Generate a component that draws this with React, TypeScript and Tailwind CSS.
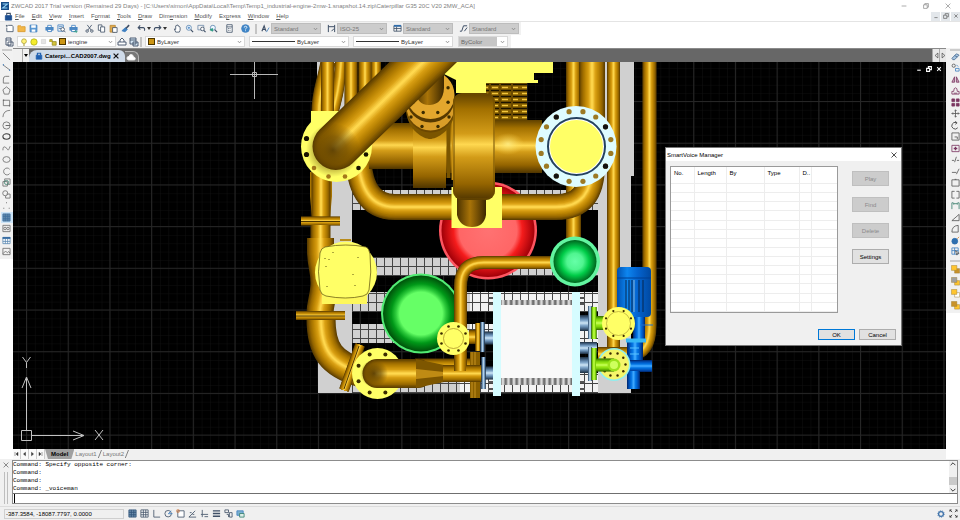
import type { ReactNode } from 'react'

const NAVY = '#3f4f66'
const BLUE = '#3f7fc0'
const PLUM = '#7a3560'
const YEL = '#ffff66'

function Glyph({ children, color = NAVY, className = 'w-[10px] h-[10px]' }: { children: ReactNode; color?: string; className?: string }) {
  return (
    <svg viewBox="0 0 10 10" className={`${className} shrink-0`} fill="none" stroke={color} strokeWidth="0.9" aria-hidden="true">
      {children}
    </svg>
  )
}

function ToolButton({ label, children, className = '' }: { label: string; children: ReactNode; className?: string }) {
  return (
    <button aria-label={label} title={label} className={`flex w-3 h-[11px] shrink-0 items-center justify-center ${className}`}>
      {children}
    </button>
  )
}

function Grip() {
  return <span className="w-[2px] h-[10px] shrink-0 border-x border-[#c4c4c4]" />
}

function Chevron() {
  return (
    <svg viewBox="0 0 6 4" className="w-[5px] h-[4px] shrink-0" fill="none" stroke="#808080" strokeWidth="0.9">
      <path d="M1 .8 3 3 5 .8" />
    </svg>
  )
}

function Combo({ label, value, className, children }: { label: string; value: string; className: string; children?: ReactNode }) {
  return (
    <label className={`flex h-[11px] shrink-0 items-center gap-[2px] border px-[2px] ${className}`}>
      {children}
      <select aria-label={label} className="h-full min-w-0 flex-1 appearance-none bg-transparent leading-none outline-none">
        <option>{value}</option>
      </select>
      <Chevron />
    </label>
  )
}

const printer = (
  <>
    <path d="M3 4V1.5h4V4" fill="#fff" stroke={BLUE} />
    <rect x="1" y="3.8" width="8" height="3" fill="#4e8ac4" stroke={BLUE} />
    <rect x="3" y="6" width="4" height="2.5" fill="#fff" stroke={BLUE} />
  </>
)
const lens = (
  <>
    <circle cx="4.3" cy="4.2" r="2.8" fill="#eef6ff" stroke="#5d87b0" />
    <path d="M6.4 6.3 9 9" strokeWidth="1.3" />
  </>
)

const standardTools: [string, ReactNode][][] = [
  [
    ['New', <path d="M1 2h2M2 1v2M3.5 1.5H8L9 3v5.5H2V4" fill="#fff" />],
    ['Open', <path d="M1 8.5V2h3l1 1h4v5.5Z" fill="#f3b748" stroke="#d99a2b" />],
    ['Save', <><path d="M1.2 1.2h7.6v7.6H1.2Z" fill="#5d9bd4" stroke={BLUE} /><path d="M2.5 1.5h5v2.6h-5ZM3 6h4v2.6H3Z" fill="#fff" stroke="none" /></>],
  ],
  [
    ['Print', printer],
    ['Preview', <><path d="M1 1h6v7H1ZM2 3h4M2 5h3" stroke={BLUE} /><circle cx="6.3" cy="6" r="2" fill="#fff" /><path d="m7.8 7.5 1.6 1.7" /></>],
    ['Publish', <>{printer}<path d="M5 8.5h4L7.5 7M9 8.5 7.5 9.7" stroke="#2a9c80" /></>],
  ],
  [
    ['Cut', <><path d="M2.5 1 7 7M7.5 1 3 7" /><circle cx="2.4" cy="7.8" r="1.4" /><circle cx="7.6" cy="7.8" r="1.4" /></>],
    ['Copy', <><path d="M1.5 1h4v6h-4Z" fill="#fff" /><path d="M4 3.2h4.5V9H4Z" fill="#fff" /></>],
    ['Paste', <><path d="M1.2 1.5H7V9H1.2Z" fill="#e0aa4c" stroke="#b98632" /><path d="M4 4h5v5.3H4Z" fill="#fff" /></>],
    ['Match properties', <><path d="M1 7.5 5 4l2 2-2.5 2.7Z" fill="#3f7fc0" stroke={BLUE} /><path d="M5.5 5 9 1.2" strokeWidth="1.8" /></>],
  ],
  [
    ['Undo', <path d="M3.5 1.5 1.3 4l2.4 2.3M1.5 4H7q2 .3 1.3 3.5" strokeWidth="1.2" />],
    ['Redo', <path d="M6.5 1.5 8.7 4 6.3 6.3M8.5 4H3q-2 .3-1.3 3.5" strokeWidth="1.2" />],
  ],
  [
    ['Pan', <path d="M3 9 1.5 5.5 3 6V2q.7-.8 1.2 0V1.4q.7-.7 1.2 0V2q.8-.6 1.2.3v1q.8-.5 1.3.3V7L7 9Z" fill="#fff" />],
    ['Zoom realtime', <>{lens}<path d="M3 4.2h2.6M4.3 3v2.5" stroke={BLUE} /></>],
    ['Zoom window', <><path d="M1 1.5h6.5v5H1Z" stroke="#6d8aa9" /><circle cx="6" cy="5.5" r="2" fill="#fff" /><path d="m7.5 7 2 2" strokeWidth="1.3" /></>],
    ['Zoom previous', <>{lens}<path d="M1 6.5 4 5v3Z" fill="#2a9c80" stroke="#2a9c80" /></>],
  ],
  [['Calculator', <><path d="M2 .8h6v8.4H2ZM2 3.2h6" fill="#fff" /><path d="M3.5 5h3M3.5 7h3" strokeDasharray="1 .6" /></>]],
  [['Help', <><circle cx="5" cy="5" r="4.3" fill="#3f86c8" stroke={BLUE} /><path d="M3.6 4q0-1.5 1.5-1.5T6.5 4Q6.4 4.7 5 5.4V6M5 7v1" stroke="#fff" /></>]],
]

const drawTools: [string, ReactNode][] = [
  ['Line', <path d="m1 1 8 8" />],
  ['Construction line', <><path d="m1 2 8 6" /><path d="M1 2h1M8 8h1" strokeWidth="1.8" stroke={BLUE} /></>],
  ['Polyline', <path d="M8 1.5H4Q1.500 1.500 1.500 4.500V9H8" />],
  ['Polygon', <path d="M5 1 9 4.2 7.5 9h-5L1 4.2Z" />],
  ['Rectangle', <><path d="M1.5 2.5h7v6h-7Z" /><path d="M1 2.5h1.4M7.7 8.5H9" strokeWidth="1.8" /></>],
  ['Arc', <path d="M1 9Q1.5 1.5 9 1.5" />],
  ['Circle', <><circle cx="5" cy="5" r="4" /><path d="M5 5h4M4 5h2" strokeWidth="1.2" /></>],
  ['Ellipse', <ellipse cx="5" cy="5" rx="4" ry="3" strokeWidth="1.2" stroke="#3c3c3c" />],
  ['Spline', <path d="M1 7Q1 2 3.5 3.5T6.5 6.5 9 2.5" />],
  ['Ellipse axis', <ellipse cx="5" cy="5" rx="4" ry="3.2" />],
  ['Ellipse arc', <path d="M8.5 2.5A3.8 3.8 0 1 0 8.8 7" />],
  ['Insert block', <><path d="M1 4h5v5H1ZM3 3.5V1h6v6H6.5" /><circle cx="5" cy="5" r="2.3" stroke="#3a806d" /></>],
  ['Make block', <><circle cx="3.6" cy="3.6" r="2.8" /><path d="M5 4.5h4V9H4V6.5" /></>],
  ['Point', <path d="M4.5 2h1M1.5 8h1M7.5 8h1" strokeWidth="1.2" />],
  ['Hatch', <path d="M1 1h8v8H1ZM1 3.7h8M1 6.4h8M3.7 1v8M6.4 1v8" fill="#638aac" stroke="#3f6f9d" />],
  ['Region', <><path d="M1 1.5h8v7H1Z" /><circle cx="3.4" cy="5" r="1.4" /><circle cx="6.6" cy="5" r="1.4" /></>],
  ['Table', <><path d="M1 1.5h8v7H1ZM1 6h8M3.7 3v5.5M6.3 3v5.5" stroke="#5b8ab3" fill="#fff" /><path d="M.7 2.2h8.6" strokeWidth="2" stroke="#3268a0" /></>],
  ['Image', <path d="M1 1.5h8v7H1Zm0 6L4 4.5l2 2L7.5 5 9 7" />],
]

const modifyTools: [string, ReactNode][] = [
  ['Erase', <path d="m1 7 5-5 3 1.5-5 5H2ZM4 4l3 1.5" fill="#a9c5e0" stroke="#476a92" />],
  ['Copy object', <><circle cx="3" cy="3" r="1.8" /><path d="M5 6h4v3H5ZM6 2l2 2" stroke={BLUE} /></>],
  ['Mirror', <path d="M4 2v6H1ZM6 2v6h3Z" fill="#c9a9bd" stroke={PLUM} />],
  ['Offset', <path d="M1 9V6h2q0-4 2-4t2 4h2v3ZM3 8h4" stroke={PLUM} />],
  ['Array', <path d="M1 1h3v3H1Zm5 0h3v3H6ZM1 6h3v3H1Zm5 0h3v3H6Z" fill={PLUM} stroke={PLUM} />],
  ['Move', <path d="M5 1v8M1 5h8M3.8 2.2 5 1l1.2 1.2M3.8 7.8 5 9l1.2-1.2M2.2 3.8 1 5l1.2 1.2M7.8 3.8 9 5 7.8 6.2" />],
  ['Rotate', <path d="M7.5 7.5A3.7 3.7 0 1 1 6 1.8M4.5.5 6.8 2 4.8 3.7" strokeWidth="1.1" />],
  ['Scale', <path d="M1 1h8v8H1ZM4 5.5h3V8" />],
  ['Stretch', <><path d="M1 1.5h8v7H1Z" stroke={PLUM} /><path d="M5 3v4M3 5h4" stroke={PLUM} strokeWidth="1.4" /></>],
  ['Trim', <path d="M1 6h2.5M6.5 6H9M4 8l2-6" />],
  ['Extend', <path d="M1 6h5M6 8l3-6" />],
  ['Break at point', <path d="M1 2h8v7H1ZM4 1.5h2" />],
  ['Break', <path d="M4 1.5H1V9h3M6 1.5h3V9H6" />],
  ['Join', <path d="M1 9V2h1.5M9 9V2H7.5M3 3h4M3 2v2M7 2v2" stroke="#377c6b" />],
  ['Chamfer', <path d="M1 8.5h8V1.5Z" />],
  ['Fillet', <path d="M1 9Q1 2 8 1.5V9Z" />],
  ['Explode', <><circle cx="4.2" cy="5.8" r="3.2" fill="#2d6eae" stroke="#2d6eae" /><path d="M7 3 9 1" stroke="#d08030" /></>],
  ['Quick select', <><path d="M1 1h7v7H1ZM1 4h7M4 1v7" stroke={BLUE} /><path d="m5 4 4 3-2 .3L6.5 9Z" fill="#fff" /></>],
]

// label, upper sheet, lower sheet
const orderTools: [string, string, string][] = [
  ['Bring to front', '#ffc52e', '#c8922a'],
  ['Send to back', '#a0a0a0', '#ffc52e'],
  ['Bring above', '#ffc52e', '#ffffff'],
  ['Send under', '#c8922a', '#ffc52e'],
]

const statusTools: [string, ReactNode][] = [
  ['Snap', <path d="M1 1h8v8H1ZM1 3.7h8M1 6.4h8M3.7 1v8M6.4 1v8" fill="#6e8fae" stroke="#2f5378" />],
  ['Grid', <path d="M1 1h8v8H1ZM1 3.7h8M1 6.4h8M3.7 1v8M6.4 1v8" fill="#fff" />],
  ['Ortho', <path d="M2 1v8h7" />],
  ['Polar', <><circle cx="4.6" cy="5.2" r="3.6" /><path d="M4.6 5.2H9.5M5 5 8 2" stroke={BLUE} /></>],
  ['Object snap', <><path d="M2 2h7v7H2Z" fill="#fff" /><path d="M1 1h2.5v2.5H1Z" stroke="#ce743a" /></>],
  ['Object snap tracking', <path d="M1 9 8 2M1 9h8M2 4h2M5 6h2" />],
  ['Dynamic UCS', <path d="M2.5 1v5H9M1 6h1.5V9M5 8.5h4" />],
  ['Lineweight', <path d="M1 2h8M1 5h8M1 8h8" strokeWidth="1.5" />],
  ['Cycle', <path d="M1 1h4v3H1ZM3 6h2v3M6 4h3v5H6Z" />],
  ['Model space', <><path d="M1 2h7v5H1Z" fill="#7ab0cf" stroke={BLUE} /><path d="M4 5h5v4H4Z" fill="#dceee8" stroke="#327d6c" /></>],
]

type Stop = [number, number, number]
const gold: Stop[] = [[92, 62, 0], [152, 105, 0], [188, 133, 4], [218, 160, 20], [255, 216, 78]]
const lime: Stop[] = [[58, 112, 0], [94, 170, 0], [130, 214, 15], [155, 232, 25], [195, 255, 85]]
const steel: Stop[] = [[34, 52, 68], [64, 91, 120], [98, 135, 171], [138, 175, 209], [200, 225, 242]]
const azure: Stop[] = [[0, 40, 110], [0, 72, 168], [0, 98, 208], [10, 122, 230], [65, 170, 255]]

// Shaded pipe: strokes of shrinking width, from the dark rim to the highlight.
function Tube({ d, w, tones = gold, cap = 'butt' }: { d: string; w: number; tones?: Stop[]; cap?: 'butt' | 'round' }) {
  const n = 20
  return (
    <g fill="none" strokeLinecap={cap} strokeLinejoin="round">
      {Array.from({ length: n }, (_, i) => {
        const pos = (i / (n - 1)) * (tones.length - 1)
        const k = Math.min(Math.floor(pos), tones.length - 2)
        const c = tones[k].map((v, j) => Math.round(v + (tones[k + 1][j] - v) * (pos - k)))
        return <path key={i} d={d} stroke={`rgb(${c.join(',')})`} strokeWidth={w * (1 - i / n)} />
      })}
    </g>
  )
}

function Bolts({ cx, cy, r, n, size, start = 0, fill = '#3a2b00' }: { cx: number; cy: number; r: number; n: number; size: number; start?: number; fill?: string }) {
  return (
    <g fill={fill}>
      {Array.from({ length: n }, (_, i) => {
        const a = ((start + (360 / n) * i) * Math.PI) / 180
        return <circle key={i} cx={cx + r * Math.cos(a)} cy={cy + r * Math.sin(a)} r={size} />
      })}
    </g>
  )
}

function Drawing() {
  return (
    <svg viewBox="13 62 933 387" preserveAspectRatio="xMinYMin slice" className="absolute inset-0 w-full h-full" role="img" aria-label="Engine model">
      <defs>
        <pattern id="minor" x="26.5" y="101.5" width="8.34" height="8.34" patternUnits="userSpaceOnUse">
          <path d="M0 0H8.34M0 0V8.34" stroke="#101010" strokeWidth="1" />
        </pattern>
        <pattern id="major" x="26" y="101" width="41.7" height="41.7" patternUnits="userSpaceOnUse">
          <path d="M0 .5H41.7M.5 0V41.7" stroke="#262626" strokeWidth="1" />
        </pattern>
        <pattern id="mesh" x="352" y="257" width="8" height="9" patternUnits="userSpaceOnUse">
          <path d="M0 .5H8M.5 0V9" stroke="#444" strokeWidth="1" />
        </pattern>
        <pattern id="slots" x="480" y="86" width="10" height="6" patternUnits="userSpaceOnUse">
          <path d="M2 1.5h6" stroke="#f2c63c" strokeWidth="1.4" />
          <path d="M0 4.5h10" stroke="#1c1300" strokeWidth="1.6" />
        </pattern>
        <pattern id="bellows" x="501" y="298" width="5.5" height="10" patternUnits="userSpaceOnUse">
          <rect width="5.5" height="10" fill="#9c9c9c" />
          <rect x="1" width="2" height="10" fill="#dcdcdc" />
          <rect x="4" width="1.2" height="10" fill="#5c5c5c" />
        </pattern>
        <radialGradient id="red">
          <stop offset="0" stopColor="#ff7272" /><stop offset=".62" stopColor="#ff6666" /><stop offset=".74" stopColor="#f51c1c" /><stop offset="1" stopColor="#a00008" />
        </radialGradient>
        <radialGradient id="green">
          <stop offset="0" stopColor="#66ff66" /><stop offset=".56" stopColor="#66ff66" /><stop offset=".66" stopColor="#2ecb3c" /><stop offset=".78" stopColor="#009818" /><stop offset="1" stopColor="#004f0a" />
        </radialGradient>
        <radialGradient id="mint">
          <stop offset="0" stopColor="#66ffa8" /><stop offset=".38" stopColor="#50f590" /><stop offset=".65" stopColor="#00cc48" /><stop offset="1" stopColor="#00641e" />
        </radialGradient>
        <radialGradient id="elbow">
          <stop offset="0" stopColor="#4b3200" stopOpacity=".85" /><stop offset=".5" stopColor="#5a3d00" stopOpacity=".6" /><stop offset="1" stopColor="#5a3d00" stopOpacity="0" />
        </radialGradient>
        <radialGradient id="glint">
          <stop offset="0" stopColor="#fff08a" /><stop offset="1" stopColor="#ffd850" stopOpacity="0" />
        </radialGradient>
        <linearGradient id="barrel" x1="0" x2="0" y1="0" y2="1">
          <stop offset="0" stopColor="#5f4100" /><stop offset=".15" stopColor="#a27000" /><stop offset=".38" stopColor="#d39c18" /><stop offset=".48" stopColor="#ffd850" /><stop offset=".6" stopColor="#d39c18" /><stop offset=".85" stopColor="#946400" /><stop offset="1" stopColor="#4f3500" />
        </linearGradient>
        <linearGradient id="motor">
          <stop offset="0" stopColor="#0050b0" /><stop offset=".3" stopColor="#0d86f0" /><stop offset=".6" stopColor="#0464d0" /><stop offset="1" stopColor="#0048a0" />
        </linearGradient>
        <linearGradient id="stub">
          <stop offset="0" stopColor="#4c3300" /><stop offset=".45" stopColor="#a87308" /><stop offset="1" stopColor="#3c2800" />
        </linearGradient>
      </defs>

      <rect x="13" y="62" width="933" height="387" fill="#000" />
      <rect x="13" y="62" width="933" height="387" fill="url(#minor)" />
      <rect x="13" y="62" width="933" height="387" fill="url(#major)" />
      <path d="M254.500 62V99M230 74.500H278" stroke="#b8b8b8" />
      <path d="M252.500 72.500h4v4h-4Z" fill="none" stroke="#b8b8b8" />

      {/* skid */}
      <g fill="#d0d0d0">
        <path d="M317 62H352V393H318ZM598 62H634V176H631V393H598Z" />
        <path d="M352 190H598V210H352ZM352 257H598V276H352ZM352 292H598V312H352ZM352 324H598V343H352ZM352 373H598V393H352Z" />
      </g>
      <path d="M470 292H598V312H470ZM470 324H598V343H470ZM460 373H598V393H460Z" fill="#f2f2f2" />
      <path d="M352 190H598V210H352ZM352 257H598V276H352ZM352 292H598V312H352ZM352 324H598V343H352ZM352 373H598V393H352Z" fill="url(#mesh)" />
      <path d="M352 210H598V257H352Z" fill="#000" />

      {/* tanks */}
      <circle cx="488" cy="230.500" r="49" fill="#ff5560" />
      <circle cx="488" cy="230.500" r="46.500" fill="url(#red)" />
      <circle cx="421" cy="313.500" r="40" fill="#52ec74" />
      <circle cx="421" cy="313.500" r="38" fill="url(#green)" />

      {/* risers on the left */}
      <Tube d="M341 62C340 85 336 100 331 118" w={12} />
      <Tube d="M328 62C324 84 319 92 319 112V180" w={15} />
      <Tube d="M327.500 62V115" w={13} />
      <Tube d="M365 62V150" w={13} />
      <Tube d="M351 62V160" w={13} />
      <Tube d="M376 62V90" w={10} />
      <path d="M310 172H332V196L330 218H312L310 196Z" fill="#a87400" />
      <Tube d="M321 172V218" w={19} />
      <Tube d="M301 221H340" w={9} />
      <path d="M301 221.500H340" stroke="#4d3500" />
      <Tube d="M320.500 225V240" w={20} />
      <Tube d="M320.500 238V250C320.500 266 325 272 324 286S320 304 320 313" w={27} />
      <Tube d="M321 318C321 350 331 364 362 373" w={29} />
      <Tube d="M296 315.500H345" w={9} />
      <path d="M296 316H345" stroke="#4d3500" />
      <Tube d="M360 345 344 390" w={10} />
      <path d="M359 346 344 389" stroke="#4d3500" />

      {/* uprights on the right */}
      <Tube d="M573.500 62V245" w={15} />
      <Tube d="M613.500 62V352" w={13} />
      <Tube d="M649.500 62V325C649.500 344 643 354 630 354H598" w={14} />
      <Tube d="M358 150C358 188 370 207 395 207H556C582 207 592 192 592 165V62" w={26} />

      {/* manifold */}
      <rect x="369" y="123" width="45" height="46" fill="url(#barrel)" />
      <rect x="444" y="120" width="98" height="53" fill="url(#barrel)" />
      <ellipse cx="508" cy="144" rx="16" ry="11" fill="url(#glint)" opacity=".8" />
      <rect x="413" y="110" width="33" height="78" fill="url(#barrel)" />
      <path d="M448.500 105V178" stroke="#7a5500" strokeWidth="4" />
      <path d="M452.500 100V180" stroke="#c89112" strokeWidth="2" />
      <rect x="480" y="82" width="47" height="38" fill="#8a6200" />
      <rect x="480" y="82" width="47" height="38" fill="url(#slots)" />
      <path d="M490 82V120M500 82V120M512 82V120" stroke="#6b4a00" strokeWidth="2" />
      <path d="M444 62H553V73H534V80H538V83H486V93H456V80L444 74Z" fill={YEL} />
      <path d="M406 111C408 131 424 139 430 139S453 131 455 111Z" fill="#7b5500" />
      <circle cx="430.500" cy="108.500" r="24" fill="#6b4700" />
      <circle cx="430.500" cy="106.500" r="24" fill="#d99d28" />
      <circle cx="430.500" cy="98.500" r="24" fill="#563900" />
      <circle cx="430.500" cy="95" r="24" fill="#e3a72d" />
      <Bolts cx={430.500} cy={95} r={19} n={8} size={1.700} start={22.500} />
      <g fill="#3a2b00"><circle cx="411" cy="117" r="1.700" /><circle cx="422" cy="126.500" r="1.700" /><circle cx="438" cy="126.500" r="1.700" /><circle cx="449" cy="117" r="1.700" /></g>
      <path d="M414 62H444V88Q443 104 430 105T414 88Z" fill="url(#stub)" />

      <path d="M311 111H342V135H311Z" fill={YEL} />
      <circle cx="336.500" cy="146.500" r="35.500" fill={YEL} />
      <g fill="#171200"><circle cx="306.500" cy="138.500" r="2.600" /><circle cx="306.500" cy="154.500" r="2.600" /><circle cx="358.500" cy="168" r="2.300" /><circle cx="366" cy="154.500" r="2.300" /></g>
      <g fill="#a5791b"><circle cx="314" cy="168" r="2.300" /><circle cx="328.500" cy="176.500" r="2.300" /><circle cx="345" cy="176.500" r="2.300" /></g>
      <Tube d="M336 146.500 446 40" w={47} cap="round" />
      <circle cx="333" cy="150" r="27" fill="url(#elbow)" />

      <path d="M451.500 187H502V228H451.500Z" fill={YEL} />
      <path d="M457 190H486V215Q484 227 472 227T457 215Z" fill="url(#stub)" />
      <rect x="453" y="93" width="42" height="107" rx="9" fill="url(#barrel)" />
      <rect x="454" y="94" width="40" height="105" rx="8" fill="none" stroke="#6b4900" opacity=".5" strokeWidth="2" />

      {/* blind flange */}
      <circle cx="576" cy="146.500" r="40.500" fill="#defcff" />
      <Bolts cx={576} cy={146.500} r={35.500} n={16} size={2.600} start={11.250} fill="#9c7a24" />
      <g fill="#111"><circle cx="556.300" cy="117" r="2.600" /><circle cx="605.500" cy="126.800" r="2.600" /><circle cx="605.500" cy="166.200" r="2.600" /><circle cx="556.300" cy="176" r="2.600" /></g>
      <circle cx="576.500" cy="146.500" r="28.500" fill="#fff" stroke="#24425f" strokeWidth="2" />
      <circle cx="576.500" cy="146.500" r="26.500" fill={YEL} />

      {/* gearbox cover */}
      <circle cx="346" cy="272.500" r="31" fill={YEL} />
      <rect x="322" y="294" width="45" height="10" fill="#fdf75c" />
      <path d="M340 240H351" stroke="#b98c1c" strokeWidth="2" />
      <path d="M325 247Q346 243 366 247 369 248 370 254 372 272 369 290 368 295 363 296 346 300 326 296 321 295 320 290 317 272 320 253 321 248 325 247Z" fill={YEL} stroke="#6f6216" strokeWidth=".8" />
      <path d="M325 258v1M329 259v1M326 266v1M358 257v1M353 274v1M327 286v1M355 285v1M333 252v1" stroke="#5d5212" />

      {/* lower line */}
      <Tube d="M415 367H480" w={17} />
      <circle cx="377.500" cy="373.500" r="25.500" fill={YEL} />
      <Bolts cx={377.500} cy={373.500} r={20.500} n={8} size={2} start={22.500} />
      <Tube d="M377 373.500H418" w={29} cap="round" />
      <circle cx="374" cy="373.500" r="14" fill="url(#elbow)" />
      <path d="M416 359 444 365V382L416 388Z" fill="#7d5600" />
      <path d="M416 369 444 372V376L416 379Z" fill="#bf8b14" />
      <Tube d="M443 373.500H482" w={17} />
      <Tube d="M460.500 371V287C460.500 270 468 262.500 484 262.500H555" w={13} />
      <circle cx="453.500" cy="338.500" r="16.500" fill={YEL} />
      <circle cx="453.500" cy="338.500" r="10" fill="none" stroke="#a68a24" strokeWidth=".7" />
      <Bolts cx={453.500} cy={338.500} r={13} n={8} size={1.300} start={22.500} />
      <Tube d="M469 337H483" w={14} />
      <Tube d="M478 323V351" w={5} />
      <path d="M470 352H480V398H470Z" fill="#8a6000" />
      <path d="M475 352V398M472 352V398" stroke="#c79220" />
      <Tube d="M466 373.500H484" w={17} />
      <circle cx="575" cy="261.500" r="25" fill="#62f5a0" />
      <circle cx="575" cy="261.500" r="21.500" fill="url(#mint)" />

      {/* plate exchanger */}
      <Tube d="M484 338H494" w={13} tones={steel} />
      <Tube d="M484 373H494" w={13} tones={steel} />
      <Tube d="M482.500 322V352" w={4} tones={steel} />
      <Tube d="M483.500 357V389" w={4} tones={steel} />
      <rect x="501" y="300" width="71" height="7" fill="url(#bellows)" />
      <rect x="501" y="377" width="71" height="8" fill="url(#bellows)" />
      <rect x="501" y="305" width="71" height="73" fill="#f9f9f9" />
      <path d="M488 298h5M488 304h5M488 382h5M488 389h5M580 298h5M580 304h5M580 382h5M580 389h5" stroke="#555" strokeWidth="2" />
      <path d="M493 292H501V396H493ZM572 292H580V396H572Z" fill="#d6fcff" />
      <Tube d="M580 323H591" w={16} tones={steel} />
      <Tube d="M580 365H591" w={16} tones={steel} />
      <Tube d="M580 348H597" w={12} tones={steel} />
      <Tube d="M590 306V339" w={4} tones={steel} />
      <Tube d="M590 347V381" w={4} tones={steel} />
      <Tube d="M594 307V339" w={5} tones={lime} />
      <Tube d="M594 348V380" w={5} tones={lime} />
      <Tube d="M596 323H612" w={14} tones={lime} />

      {/* pump */}
      <rect x="617" y="267" width="34" height="50" rx="4" fill="url(#motor)" />
      <path d="M617 278H651" stroke="#003f91" />
      <path d="M626 280V308M629 280V310M632 280V312M639 280V312M643 280V312" stroke="#06274e" />
      <path d="M634 280V312" stroke="#8cb8d8" />
      <Tube d="M639 317V342" w={12} tones={azure} />
      <Tube d="M635 342V372" w={16} tones={azure} />
      <Tube d="M620 366H652" w={12} tones={azure} />
      <Tube d="M633.500 371V389" w={13} tones={azure} />
      <path d="M626 340.500H646" stroke="#35b6f4" strokeWidth="4" />
      <path d="M630 348H639M630 354H639" stroke="#58c4ff" />
      <path d="M640 325H653" stroke="#1a6fd0" />
      <circle cx="618.500" cy="323.500" r="16.500" fill={YEL} />
      <circle cx="618.500" cy="323.500" r="12" fill="none" stroke="#b4a537" strokeWidth=".7" />
      <Bolts cx={618.500} cy={323.500} r={13.500} n={8} size={1.100} start={22.500} />
      <circle cx="614" cy="364.500" r="16.500" fill="#90edee" />
      <circle cx="614" cy="364.500" r="15" fill="#f5f56a" />
      <Bolts cx={614} cy={364.500} r={11.500} n={10} size={1.200} />
      <Tube d="M596 365H614" w={13} tones={lime} />
      <circle cx="614" cy="365" r="6.500" fill="#9be21c" />
      <circle cx="614" cy="365" r="4" fill="#ceff5e" />

      {/* UCS icon */}
      <g fill="none" stroke="#c2c2c2">
        <path d="M21.500 430.500H31.500V440.500H21.500ZM26.500 430V378M22 388 26.500 377 31 388M32 435.500H84M73 431 84 435.500 73 440" />
        <path d="M22.500 357 26.500 362.500 30.500 357M26.500 362.500V368M95 430 103 440M103 430 95 440" />
      </g>
    </svg>
  )
}

function SmartVoiceDialog() {
  return (
    <section role="dialog" aria-label="SmartVoice Manager" className="absolute left-[652px] top-[85px] w-[237px] border border-[#777] bg-[#f0f0f0] text-black">
      <header className="flex h-[13px] items-center justify-between bg-white px-[1px]">
        <h2>SmartVoice Manager</h2>
        <button aria-label="Close" className="flex w-3 justify-center">
          <svg viewBox="0 0 6 6" className="w-[6px] h-[6px]" stroke="#222" strokeWidth=".8"><path d="m.5.5 5 5M5.500.5l-5 5" /></svg>
        </button>
      </header>
      <div className="flex justify-between pl-1 pr-3 pt-[5px]">
        <div className="h-[147px] w-[168px] border border-[#9a9a9a] bg-white">
          <table className="h-full w-full table-fixed border-collapse text-left leading-none">
            <colgroup>
              <col className="w-[23px]" /><col className="w-8" /><col className="w-[38px]" /><col className="w-[35px]" /><col className="w-3" /><col />
            </colgroup>
            <thead>
              <tr className="h-[12px]">
                {['No.', 'Length', 'By', 'Type', 'D..', ''].map((h, i) => (
                  <th key={i} className="whitespace-nowrap border-r border-[#ededed] pl-[3px] font-normal last:border-r-0">{h}</th>
                ))}
              </tr>
            </thead>
            <tbody>
              {Array.from({ length: 15 }, (_, r) => (
                <tr key={r}>
                  {Array.from({ length: 6 }, (_, c) => (
                    <td key={c} className="border-b border-r border-[#ededed] p-0 last:border-r-0" />
                  ))}
                </tr>
              ))}
            </tbody>
          </table>
        </div>
        <div className="flex flex-col gap-[11px] pt-[5px]">
          {['Play', 'Find', 'Delete'].map((b) => (
            <button key={b} disabled className="h-[15px] w-[37px] border border-[#bfbfbf] bg-[#cccccc] text-[#8a8a8a]">{b}</button>
          ))}
          <button className="h-[15px] w-[37px] border border-[#adadad] bg-[#e1e1e1]">Settings</button>
        </div>
      </div>
      <footer className="flex justify-end gap-1 pb-[5px] pr-[5px] pt-[16px]">
        <button className="h-[11px] w-[37px] border border-[#0078d7] bg-[#e1e1e1]">OK</button>
        <button className="h-[11px] w-[37px] border border-[#adadad] bg-[#e1e1e1]">Cancel</button>
      </footer>
    </section>
  )
}

const menus = ['File', 'Edit', 'View', 'Insert', 'Format', 'Tools', 'Draw', 'Dimension', 'Modify', 'Express', 'Window', 'Help']
const accel: Record<string, number> = { Format: 1, Dimension: 3, Express: 2 }

function MenuBar() {
  return (
    <nav className="flex h-[11px] items-center border-b border-[#e4e4e4] pl-1">
      <Glyph className="w-[9px] h-[9px]">
        <path d="M3 4V1.500h4V4" strokeWidth="1.200" /><path d="M1.500 4h7v5h-7Z" fill="#1e4f92" stroke="#1e4f92" />
      </Glyph>
      <div className="ml-[2px] flex gap-[7px]">
        {menus.map((m) => {
          const k = accel[m] ?? 0
          return <button key={m}>{m.slice(0, k)}<u>{m[k]}</u>{m.slice(k + 1)}</button>
        })}
      </div>
      <div className="ml-auto flex gap-[1px]">
        {['M3 7h4', 'M2 4h4v4H2ZM4 4V2h4v4H6', 'm3 3 4 4M7 3 3 7'].map((d, i) => (
          <button key={d} aria-label={['Minimize drawing', 'Restore drawing', 'Close drawing'][i]} className="flex h-[9px] w-[9px] items-center justify-center bg-[#e3e7eb]">
            <Glyph className="w-[8px] h-[8px]" color="#666"><path d={d} /></Glyph>
          </button>
        ))}
      </div>
    </nav>
  )
}

const styleCombos: [string, string, ReactNode][] = [
  ['Text style', 'Standard', <><path d="M1 8 3.500 2 5.500 8M2 6h3" strokeWidth="1.200" /><path d="m6 9 3-5" stroke={BLUE} /></>],
  ['Dimension style', 'ISO-25', <path d="M1.500 1v8M8.500 1v8M1.500 3h7M5 8l3-3" strokeWidth="1.100" />],
  ['Table style', 'Standard', <><path d="M1 2h8v6H1ZM1 5h8M4 3v5" /><path d="M1 2h8" stroke="#2f6cab" strokeWidth="2" /></>],
  ['Multileader style', 'Standard', <path d="M1 8h2l2-6h4M6 8l3-4" strokeWidth="1.100" />],
]

function Toolbars() {
  return (
    <div>
      <div className="flex h-[13px] w-[521px] items-center bg-[#f1f1f1] pl-[3px]">
        {standardTools.map((group, g) => (
          <div key={g} className="mr-[4px] flex items-center">
            {group.map(([label, art]) => (
              <div key={label} className="flex items-center">
                <ToolButton label={label}><Glyph className="w-[9px] h-[9px]">{art}</Glyph></ToolButton>
                {g === 3 && <svg viewBox="0 0 4 3" className="h-[3px] w-[4px]"><path d="M0 0h4L2 3Z" fill="#333" /></svg>}
              </div>
            ))}
          </div>
        ))}
        <Grip />
        <div className="ml-[2px] flex items-center gap-1">
          {styleCombos.map(([label, value, art]) => (
            <div key={label} className="flex items-center">
              <ToolButton label={label}><Glyph className="w-[9px] h-[9px]">{art}</Glyph></ToolButton>
              <Combo label={label} value={value} className="w-[50px] border-[#bdbdbd] bg-[#cccccc] text-[#777]" />
            </div>
          ))}
        </div>
      </div>
      <div className="flex h-[13px] w-[511px] items-center bg-[#f1f1f1] pl-[3px] text-[#333]">
        <ToolButton label="Layer manager"><Glyph><path d="M2 1h5v7H2ZM2 3h5M4 5h5v4H4Z" fill="#fff" /></Glyph></ToolButton>
        <Combo label="Layer" value="iengine" className="ml-[2px] w-[99px] border-[#d9d9d9] bg-white">
          <Glyph className="w-[8px] h-[8px]" color="#a89a2c"><circle cx="5" cy="4" r="3" fill="#fff27a" /><path d="M4 8h2M4 9.500h2" /></Glyph>
          <Glyph className="w-[8px] h-[8px]" color="#a6a818"><circle cx="5" cy="5" r="4" fill="#f5ec2c" /></Glyph>
          <Glyph className="w-[7px] h-[7px]" color="#d0d0d0"><path d="M2 2h6v6H2Z" fill="#e4e4e4" /></Glyph>
          <Glyph className="w-[8px] h-[8px]" color="#8d8120"><path d="M1 5V2h3v3M4 4.500h5V9H4Z" fill="#d6c53a" /></Glyph>
          <span className="h-[7px] w-[7px] border border-[#4d3700] bg-[#cc9514]" />
        </Combo>
        <ToolButton label="Make current"><Glyph><path d="M1 5h8v3H1ZM3 5V3l2-2 2 2v2" fill="#fff" /></Glyph></ToolButton>
        <ToolButton label="Layer previous"><Glyph><path d="M1 1h6v6H1ZM1 3h6M4 5h5v4H4Z" fill="#d6e7f5" /></Glyph></ToolButton>
        <Grip />
        <Combo label="Color" value="ByLayer" className="ml-[3px] w-[100px] border-[#d9d9d9] bg-white">
          <span className="h-[7px] w-[7px] border border-[#4d3700] bg-[#cc9514]" />
        </Combo>
        <Combo label="Linetype" value="ByLayer" className="ml-[4px] w-[100px] border-[#d9d9d9] bg-white">
          <span className="h-px w-[43px] bg-[#333]" />
        </Combo>
        <Combo label="Lineweight" value="ByLayer" className="ml-[4px] w-[100px] border-[#d9d9d9] bg-white">
          <span className="h-px w-[43px] bg-[#333]" />
        </Combo>
        <Combo label="Plot style" value="ByColor" className="ml-[5px] w-[50px] border-[#d9d9d9] bg-gradient-to-r from-[#c6c6c6] from-80% to-white to-80% text-[#666]" />
      </div>
    </div>
  )
}

function DocumentTabs() {
  return (
    <div className="flex h-[14px] items-end border-t border-[#8a8a8a] bg-[#676767]">
      <span className="h-full w-[10px] border-r border-[#aaa] bg-[#f0f0f0]" />
      <button aria-label="Tab list" className="flex h-full w-[6px] items-center justify-center bg-[#f0f0f0]">
        <svg viewBox="0 0 4 3" className="h-[3px] w-[4px]"><path d="M0 0h4L2 3Z" fill="#000" /></svg>
      </button>
      <div className="flex h-[12px] items-center gap-[2px] rounded-tl-[8px] rounded-tr-[6px] bg-[#cfdbe9] pl-[6px] pr-[6px] font-bold text-black">
        <Glyph className="w-[8px] h-[8px]" color="#2060b0"><path d="M3 4V1.500h4V4" strokeWidth="1.400" /><path d="M1.500 4h7v5h-7Z" fill="#2060b0" /></Glyph>
        <span>Caterpi...CAD2007.dwg</span>
        <button aria-label="Close tab">
          <Glyph className="w-[6px] h-[6px]" color="#111"><path d="m1 1 8 8M9 1 1 9" strokeWidth="2" /></Glyph>
        </button>
      </div>
      <button aria-label="Cloud" className="flex h-[11px] w-[14px] items-center justify-center rounded-tr-[6px] border-r border-t border-[#b5b5b5] bg-[#777]">
        <Glyph color="#eee"><path d="M2.500 8Q.5 7.500 1 5.800T3 4.500Q3.500 2 5.500 2.500T7.500 5Q9.500 5.200 9.300 6.800T7.500 8Z" fill="#fff" /></Glyph>
      </button>
      <div className="ml-auto flex h-full bg-[#e8e8e8]">
        {['M7 1.500v7L3 5Z', 'M3 1.500v7L7 5Z'].map((d, i) => (
          <button key={d} aria-label={i ? 'Next tab' : 'Previous tab'} className="flex w-[7px] items-center justify-center border-l border-[#aaa]">
            <Glyph className="w-[7px] h-[9px]" color="#333"><path d={d} /></Glyph>
          </button>
        ))}
      </div>
    </div>
  )
}

function LayoutTabs() {
  return (
    <div className="flex h-[10px] items-center bg-[#f0f0f0] text-[#777]">
      {['M2 1v8M8 1.500v7L4 5Z', 'M7 1.500v7L3 5Z', 'M3 1.500v7L7 5Z', 'M8 1v8M2 1.500v7L6 5Z'].map((d, i) => (
        <button key={d} aria-label={['First', 'Previous', 'Next', 'Last'][i]} className="flex h-full w-2 items-center justify-center border-r border-[#ccc] bg-[#fafafa]">
          <Glyph className="w-[5px] h-[6px]" color="#333"><path d={d} fill="#333" /></Glyph>
        </button>
      ))}
      <button className="h-full bg-[#a0a0a0] px-[6px] font-bold text-black [clip-path:polygon(0_0,100%_0,calc(100%-3px)_100%,3px_100%)]">Model</button>
      {['Layout1', 'Layout2'].map((t) => (
        <button key={t} className="flex h-full items-center pl-[1px]">
          {t}
          <svg viewBox="0 0 5 10" className="h-[8px] w-[5px]"><path d="M5 0 1 10" stroke="#666" /></svg>
        </button>
      ))}
    </div>
  )
}

function CommandPanel() {
  return (
    <section className="flex h-[47px] bg-[#f0f0f0] pb-[2px] pr-[2px] pt-[1px]">
      <div className="flex w-3 flex-col items-center gap-1 pt-[2px]">
        <button aria-label="Close command line"><Glyph className="w-[6px] h-[6px]" color="#333"><path d="m1 1 8 8M9 1 1 9" /></Glyph></button>
        <span className="w-[4px] flex-1 border-x border-[#bdbdbd]" />
      </div>
      <div className="flex min-w-0 flex-1 flex-col border border-[#8c8c8c] bg-white font-['Liberation_Mono',monospace] text-[6px] text-black">
        <div className="flex flex-1 justify-between">
          <pre className="font-[inherit] leading-[8px]">{'Command: Specify opposite corner:\nCommand:\nCommand:\nCommand: _voiceman'}</pre>
          <div className="flex w-2 flex-col items-center justify-between bg-[#f0f0f0]">
            <Glyph className="w-[6px] h-[6px]" color="#333"><path d="M1 7 5 3l4 4" strokeWidth="1.600" /></Glyph>
            <span className="mt-2 h-2 w-full bg-[#c9c9c9]" />
            <Glyph className="w-[6px] h-[6px]" color="#333"><path d="m1 3 4 4 4-4" strokeWidth="1.600" /></Glyph>
          </div>
        </div>
        <div className="flex h-[12px] items-center border-t border-[#6f6f6f] pl-[1px]">
          <span className="h-[9px] w-px bg-black" />
          <input aria-label="Command" className="h-full min-w-0 flex-1 outline-none" />
        </div>
      </div>
    </section>
  )
}

export default function App() {
  return (
    <div className="flex min-h-screen flex-col overflow-hidden bg-white font-['Liberation_Sans',Arial,sans-serif] text-[6px] leading-[8px] text-[#555]">
      <header className="flex h-[11px] items-center pl-[1px]">
        <Glyph className="w-[8px] h-[8px]"><rect width="10" height="10" fill="#164c86" stroke="none" /><path d="M2 2.500h6l-6 5h6" stroke="#8fd0f4" strokeWidth="1.300" /></Glyph>
        <h1 className="ml-[2px] whitespace-nowrap text-[#808080]">
          {'ZWCAD 2017 Trial version (Remained 29 Days) - [C:\\Users\\simon\\AppData\\Local\\Temp\\Temp1_industrial-engine-2mw-1.snapshot.14.zip\\Caterpillar G35 20C V20 2MW_ACA]'}
        </h1>
        <div className="ml-auto flex gap-4 pr-[9px]">
          {['M1 5h8', 'M1 3h6v6H1ZM3 3V1h6v6H7', 'm1 1 8 8M9 1 1 9'].map((d, i) => (
            <button key={d} aria-label={['Minimize', 'Restore', 'Close'][i]}><Glyph className="w-[6px] h-[6px]" color="#666"><path d={d} /></Glyph></button>
          ))}
        </div>
      </header>
      <MenuBar />
      <Toolbars />

      <div className="flex min-h-0 flex-1">
        <aside className="w-[13px] shrink-0">
          <div className="flex flex-col items-center bg-[#f1f1f1] pb-[2px] pt-[1px]">
            <span className="h-[2px] w-[10px] border-y border-[#ccc]" />
            <div className="flex h-[206px] flex-col justify-between">
              {drawTools.map(([label, art]) => (
                <ToolButton key={label} label={label} className={label === 'Hatch' ? 'bg-[#cce4f7]' : ''}><Glyph className="w-[9px] h-[9px]" color="#6c6c6c">{art}</Glyph></ToolButton>
              ))}
            </div>
          </div>
        </aside>

        <main className="flex min-w-0 flex-1 flex-col">
          <DocumentTabs />
          <div className="relative flex-1 overflow-hidden bg-black">
            <Drawing />
            <div className="absolute right-1 top-1 flex gap-1">
              {['M2 7h6', 'M1 4h5v5H1ZM4 4V1h5v5H6', 'm2 2 6 6M8 2 2 8'].map((d, i) => (
                <button key={d} aria-label={['Minimize view', 'Restore view', 'Close view'][i]}><Glyph className="w-[6px] h-[6px]" color="#fff"><path d={d} strokeWidth="1.800" /></Glyph></button>
              ))}
            </div>
            <SmartVoiceDialog />
          </div>
          <LayoutTabs />
        </main>

        <aside className="w-[14px] shrink-0">
          <div className="flex flex-col items-center bg-[#f1f1f1] pb-[2px] pl-1 pt-[1px]">
            <span className="h-[2px] w-[10px] border-y border-[#ccc]" />
            <div className="flex h-[206px] flex-col justify-between">
              {modifyTools.map(([label, art]) => (
                <ToolButton key={label} label={label}><Glyph className="w-[9px] h-[9px]" color="#555">{art}</Glyph></ToolButton>
              ))}
            </div>
            <span className="mb-[2px] mt-[3px] h-[2px] w-[10px] border-y border-[#ccc]" />
            <div className="flex flex-col gap-[1px]">
              {orderTools.map(([label, a, b]) => (
                <ToolButton key={label} label={label}>
                  <Glyph className="w-[9px] h-[9px]" color="#9c7b30"><path d="M4 4h5.500v5H4Z" fill={b} strokeWidth=".5" /><path d="M.5.5h6v5.500h-6Z" fill={a} strokeWidth=".5" /></Glyph>
                </ToolButton>
              ))}
            </div>
          </div>
        </aside>
      </div>

      <CommandPanel />
      <footer className="flex h-[14px] items-center border-t border-[#dcdcdc] bg-[#f0f0f0] pl-1 text-black">
        <output className="h-[10px] w-[120px] border border-[#cfcfcf] pl-[1px] leading-[8px]">-387.3584, -18087.7797, 0.0000</output>
        <div className="ml-[2px] flex">
          {statusTools.map(([label, art]) => (
            <ToolButton key={label} label={label}><Glyph className="w-[9px] h-[9px]">{art}</Glyph></ToolButton>
          ))}
        </div>
        <div className="ml-auto flex pr-[1px]">
          <ToolButton label="Settings"><Glyph className="w-[8px] h-[8px]" color="#3f73aa"><circle cx="5" cy="5" r="3" strokeWidth="1.600" /><circle cx="5" cy="5" r="4.200" strokeDasharray="1.300 1.300" /></Glyph></ToolButton>
          <ToolButton label="Full screen"><Glyph className="w-[9px] h-[9px]" color="#333"><path d="M1 3V1h2M7 1h2v2M9 7v2H7M3 9H1V7M1 1l2.500 2.500M9 1 6.500 3.500M9 9 6.500 6.500M1 9l2.500-2.500" /></Glyph></ToolButton>
        </div>
      </footer>
    </div>
  )
}
